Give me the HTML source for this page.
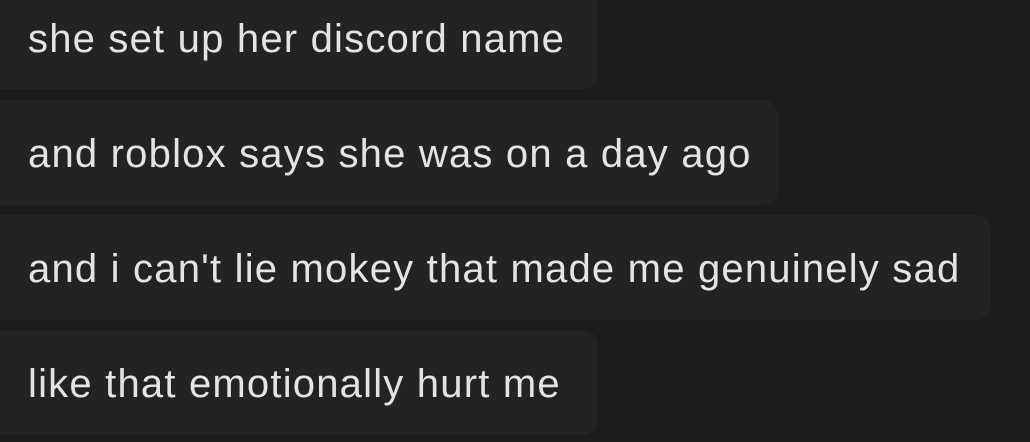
<!DOCTYPE html>
<html><head><style>
html,body{margin:0;padding:0;width:1030px;height:442px;overflow:hidden;background:#1b1c1c;}
.b{position:absolute;left:-20px;background:#222323;border-radius:15px;height:105px;}
.t{position:absolute;left:28px;font-family:"Liberation Sans",sans-serif;font-size:40px;letter-spacing:1.2px;color:#e4e4e4;white-space:nowrap;line-height:1;}
</style></head><body>
<div class="b" style="top:-16px;width:618px"></div>
<div class="b" style="top:100px;width:798px"></div>
<div class="b" style="top:215px;width:1011px"></div>
<div class="b" style="top:330px;width:618px"></div>
<div class="t" style="top:19px">she set up her discord name</div>
<div class="t" style="top:134px">and roblox says she was on a day ago</div>
<div class="t" style="top:249px">and i can't lie mokey that made me genuinely sad</div>
<div class="t" style="top:364px">like that emotionally hurt me</div>
</body></html>
